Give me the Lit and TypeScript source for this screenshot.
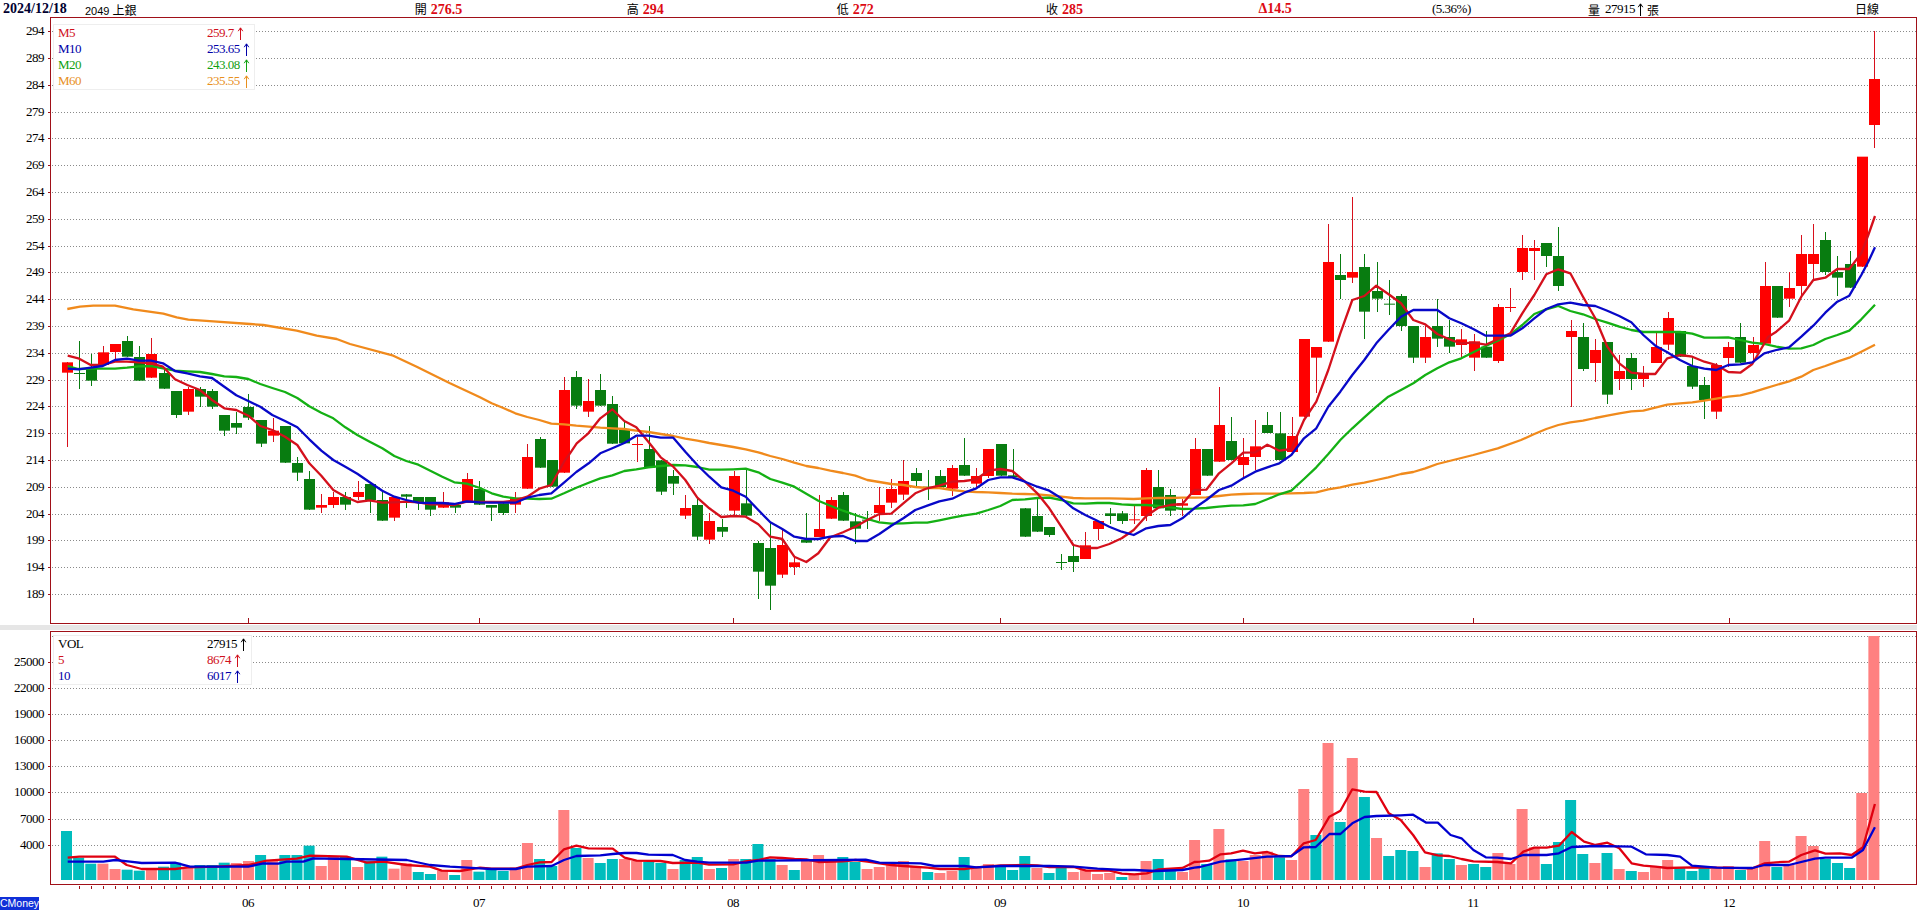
import { LitElement, html, css, svg } from "lit";
import { customElement } from "lit/decorators.js";

type Pt = [number, number];
const S = 12.13;
const X0 = 66.5;
const cx = (i: number) => X0 + i * S;

const conv = (x0: number, y0: number, h: number, s: string): Pt[] =>
  s.trim().split(/\s+/).map((p) => {
    const [a, b] = p.split(",").map(Number);
    return [x0 + a / h, y0 + b / 3] as Pt;
  });
const toPts = (p: Pt[]) => p.map(([x, y]) => `${x.toFixed(1)},${y.toFixed(1)}`).join(" ");

/* kind wickTop bodyTop bodyBottom wickBottom, as read from the crops */
const C6 = `r 127 127 158 380|g 63 159 161 207|g 102 146 182 197|r 78 97 135 135|r 72 72 96 118|g 48 63 110 110|g 78 111 182 182|r 54 102 173 173|g 150 159 206 206|g 213 213 285 293|r 200 207 275 284|g 200 207 230 260|g 207 213 260 268|g 285 285 332 347|g 275 309 323 341|g 222 261 293 300|g 300 300 371 380|r 293 332 347 365|g 318 318 428 428|g 411 429 458 482|g 454 477 569 569|r 522 555 563 578|r 516 531 555 563|g 516 531 554 569|r 484 516 531 540|g 492 492 540 578|g 516 540 602 602|r 531 531 593 602|g 523 523 530 563|g 531 531 546 569|g 531 531 569 587|r 516 547 563 563|g 555 555 563 580|r 460 477 546 546|g 484 507 554 554`;
const C7 = `g 495 495 503 542|g 490 490 519 526|r 457 473 494 518|r 313 351 446 446|g 290 297 383 383|g 360 360 440 440|r 112 150 398 398|g 94 111 197 206|r 118 183 215 230|g 103 150 197 197|g 167 192 311 311|g 247 269 310 310|r 290 312 314 365|g 257 327 383 383|g 361 361 455 464|g 391 408 431 464|r 466 504 527 536|g 473 495 590 600|r 519 543 599 613|g 538 561 575 590|r 392 408 512 530|g 390 490 527 527|g 602 609 695 776|g 545 624 737 809|r 567 615 704 713|r 650 667 681 704|g 519 599 608 608|r 465 567 591 591|r 472 480 536 536|g 457 465 542 542|g 520 544 566 613|g 514 539 541 566|r 441 495 519 543|r 418 447 488 504|r 361 423 464 480|g 385 399 423 440|g 390 440 442 480|g 391 408 441 441|r 376 384 446 468`;
const C8 = `g 775 855 887 887|r 865 888 911 925|r 807 807 888 895|g 792 792 887 887|g 807 886 892 895|g 985 985 1070 1070|g 950 1008 1055 1055|g 1041 1041 1065 1070|g 1122 1146 1148 1170|g 1095 1128 1146 1175|r 1056 1096 1137 1137|r 1023 1023 1047 1080|g 985 1000 1008 1032|g 994 1000 1023 1032|r 978 1018 1020 1032|r 865 870 1008 1023|g 870 921 985 985|g 928 945 992 1008|r 958 970 977 1008|r 775 807 945 945|g 807 807 887 887|r 622 735 845 845|g 712 783 840 840|r 775 831 855 893|r 720 799 831 870|g 697 735 759 759|g 697 760 840 840|r 712 768 816 816|r 477 477 710 710|r 501 501 533 638|r 132 246 485 485|g 222 285 300 356|r 52 276 293 308|g 222 261 395 476|g 246 333 356 396|g 300 371 373 404|g 343 348 438 452|g 438 438 533 548|r 438 471 533 548|g 357 438 476 500`;
const C9 = `g 420 471 500 518|r 447 478 495 532|r 462 484 533 572|g 454 500 533 533|r 372 381 543 548|r 324 381 383 396|r 165 204 276 300|r 180 204 213 300|g 189 189 228 261|g 141 228 318 333|r 420 453 471 680|g 429 471 567 572|r 477 510 549 606|g 486 486 644 672|r 526 573 597 630|g 519 534 597 630|r 558 582 597 620|r 458 501 549 549|r 396 414 494 510|g 453 453 530 530|g 530 558 620 628|g 590 615 660 718|r 550 555 695 718|r 486 501 534 560|g 430 471 548 548|r 472 495 519 550|r 246 318 491 491|g 318 318 413 413|r 276 324 356 380|r 165 222 318 348|r 132 222 252 300|g 156 180 276 285|g 228 276 293 348|g 213 252 323 323|r -70 -70 260 260|r -448 -303 -165 -95`;

type Candle = { k: string; wt: number; bt: number; bb: number; wb: number };
const parse = (s: string, y0: number): Candle[] =>
  s.split("|").map((r) => {
    const t = r.split(" ");
    const f = (v: string) => y0 + Number(v) / 3;
    return { k: t[0], wt: f(t[1]), bt: f(t[2]), bb: f(t[3]), wb: f(t[4]) };
  });
const CANDLES: Candle[] = [...parse(C6, 320), ...parse(C7, 340), ...parse(C8, 180), ...parse(C9, 180)];

const M5: Pt[] = [
  ...conv(0, 320, 3, "203,107 235,115 272,135 308,135 345,125 381,125 417,127 453,130 489,140 525,178 562,195 600,210 636,240 673,265 709,270 745,287 781,318 817,330 855,350 892,375 928,430 964,467 1000,510 1036,530 1072,546 1109,541 1147,548 1183,547 1219,545 1255,547 1291,553 1327,553 1363,555 1400,545"),
  ...conv(480, 340, 3, "0,486 35,486 70,486 106,481 142,470 178,446 214,435 252,365 270,340 290,310 325,280 361,235 397,208 433,243 469,262 505,305 542,352 580,380 616,420 652,473 688,505 724,531 760,528 797,530 835,553 871,590 907,597 943,650 979,666 1015,640 1051,592 1089,577 1126,560 1162,540 1198,522 1234,521 1270,490 1306,460 1342,445 1378,437 1417,425"),
  ...conv(960, 180, 3, "13,903 49,898 85,872 121,867 157,873 195,905 232,940 268,985 304,1040 340,1095 376,1104 412,1104 448,1092 485,1075 521,1050 559,1008 595,983 631,975 667,972 703,930 739,929 777,880 814,850 850,818 886,817 922,794 958,812 994,807 1032,720 1069,665 1105,570 1141,460 1177,360 1213,348 1249,317 1285,342 1323,370 1360,420 1396,433 1432,462"),
  ...conv(1440, 180, 3, "28,478 64,490 100,488 137,494 173,478 211,460 247,400 283,345 319,283 355,268 391,280 429,350 466,415 502,500 538,550 574,578 610,582 646,582 682,535 720,525 757,530 793,545 829,555 865,576 901,578 937,552 985,470 1009,455 1047,422 1084,350 1120,300 1156,293 1192,267 1228,267 1264,220 1285,165 1305,108"),
];
const M10: Pt[] = [
  ...conv(0, 320, 3, "203,146 235,148 272,143 308,138 345,120 381,116 417,122 453,122 489,130 525,153 562,160 600,169 636,174 673,200 709,226 745,243 781,260 817,285 855,303 892,322 928,358 964,392 1000,420 1036,440 1072,461 1109,487 1147,512 1183,530 1219,540 1255,548 1291,549 1327,549 1363,552 1400,544"),
  ...conv(480, 340, 3, "0,487 35,488 70,488 106,488 142,473 178,465 214,460 252,428 289,396 326,370 361,340 397,325 433,309 469,287 505,287 542,293 580,293 616,335 652,375 688,410 724,442 760,452 797,470 835,510 871,547 907,567 943,590 979,597 1015,597 1051,590 1089,588 1126,603 1162,603 1198,582 1234,557 1270,535 1306,510 1342,497 1378,484 1417,476"),
  ...conv(960, 180, 3, "13,938 49,925 85,900 121,892 157,892 195,905 232,920 268,932 304,955 340,985 376,1005 412,1022 448,1040 485,1055 521,1065 559,1045 595,1038 631,1035 667,1015 703,985 739,960 777,930 814,917 850,895 886,875 922,862 958,850 994,825 1032,775 1069,745 1105,680 1141,635 1177,585 1213,540 1249,490 1285,450 1323,410 1360,390 1396,390 1432,390"),
  ...conv(1440, 180, 3, "28,415 64,430 100,447 137,467 173,467 211,467 247,445 283,415 319,387 355,373 391,368 429,375 466,378 502,392 538,408 574,427 610,465 646,497 682,517 720,540 757,558 793,566 829,570 865,555 901,553 937,547 973,520 1009,510 1047,502 1084,470 1120,437 1156,398 1192,365 1228,347 1264,285 1285,245 1305,202"),
];
const M20: Pt[] = [
  ...conv(0, 320, 3, "203,138 235,147 272,146 308,146 345,146 381,143 417,139 453,138 489,145 525,152 562,154 600,156 636,162 673,169 709,171 745,177 781,192 817,204 855,216 892,234 928,259 964,278 1000,295 1036,322 1072,345 1109,365 1147,385 1183,408 1219,423 1255,434 1291,452 1327,470 1363,487 1400,491"),
  ...conv(480, 340, 3, "0,444 35,460 70,470 106,475 142,476 178,477 214,476 252,460 289,443 326,428 361,415 397,406 433,393 469,388 505,382 542,378 580,375 616,376 652,381 688,389 724,389 760,388 797,386 835,397 871,417 907,428 943,440 979,461 1015,482 1051,497 1089,512 1126,525 1162,537 1198,547 1234,551 1270,550 1306,548 1342,548 1378,541 1417,533"),
  ...conv(960, 180, 3, "13,1006 49,1001 85,990 121,978 157,960 195,958 232,954 268,953 304,960 340,970 376,971 412,969 448,969 485,973 521,975 559,975 595,978 631,982 667,987 703,986 739,984 777,980 814,977 850,976 886,972 922,958 958,943 994,932 1032,897 1069,862 1105,822 1141,780 1177,745 1213,712 1249,680 1285,650 1323,630 1360,610 1396,585 1432,565"),
  ...conv(1440, 180, 3, "28,547 64,535 100,517 137,498 173,482 211,463 247,435 283,402 319,388 355,378 391,393 429,403 466,417 502,428 538,440 574,450 610,456 646,456 682,456 720,456 757,461 793,473 829,473 865,472 901,480 937,488 973,492 1009,500 1047,506 1084,505 1120,495 1156,477 1192,465 1228,452 1264,418 1305,374"),
];
const M60: Pt[] = [
  ...conv(50, 290, 3, "52,57 90,50 130,47 195,47 250,58 340,71 380,82 415,89 490,94 600,102 640,105 740,122 800,137 860,147 900,162"),
  ...conv(0, 320, 3, "1180,107 1250,140 1350,190"),
  ...conv(480, 340, 3, "0,172 35,190 70,204 106,220 142,231 178,240 214,251 252,253 289,257 326,260 361,263 397,265 433,267 469,272 505,276 542,282 580,288 616,296 652,302 688,309 724,315 760,321 797,328 835,337 871,348 907,357 943,368 979,378 1015,384 1051,392 1089,399 1126,407 1162,420 1198,426 1234,432 1270,435 1306,441 1342,444 1378,444 1417,450"),
  ...conv(960, 180, 3, "13,934 49,936 85,937 121,939 157,941 195,942 232,943 268,946 304,950 340,954 376,955 412,955 448,955 485,956 521,957 559,955 595,954 631,954 667,953 703,953 739,952 777,948 814,944 850,942 886,941 922,941 958,941 994,940 1032,939 1069,937 1105,928 1141,922 1177,914 1213,908 1249,900 1285,892 1323,882 1360,876 1396,865 1432,852"),
  ...conv(1440, 180, 3, "100,825 173,805 243,780 283,762 319,747 355,735 391,727 429,722 466,714 502,707 538,700 574,694 610,692 646,683 682,674 720,670 757,667 793,662 829,656 865,650 901,646 937,637 973,626 1009,615 1047,604 1084,590 1120,570 1156,558 1192,545 1228,533 1264,515 1305,494"),
];

/* volume bars: colour and top in crop units (crop bottom is the bars' baseline) */
const V4 = `t723 t803 t821 p821 p837 t839 t842 p838 t830 t818 p833 t825 t825 t818 p819 p813 t795 p813 t795 t795 t767 p828 p798 t800 p831 t813 t800 p836 p820 t846 t852 p842 t855 p810 t845`;
const V10 = `t720 t723 p713 p639 t687 t708 p540 t654 p684 t699 t687 p687 p693 t696 t699 p717 t690 t681 p717 t714 p687 t687 t642 t687 p705 t720 p690 p675 p690 t681 t696 p717 p711 p705 p693 p708 t726 p729 p723 t681 p714 p702 t708 t720 t678 p714 t729 t708 p726 p720 p732 p729 t741 p732 p693 t687 t714 p726 p630`;
const V5 = `t792 p687 t778 p783 p765 p755 t772 p780 p567 t705 p429 t666 p474 t591 p714 t768 t750 t753 p801 t760 t777 p795 t792 t801 p759 p792 p627 p742 t792 t726 t600 t762 p789 t759 p807 t813 p816 p798 p780 t804 t813 t801 p807 p798 t810 p803 p723 t801 p792 p708 p738 t777 t789 t804 p579 p108`;
const vol = (s: string, y0: number) =>
  s.split(" ").map((t) => ({ k: t[0], top: y0 + Number(t.slice(1)) / 3 }));
const BARS = [...vol(V4, 590), ...vol(V10, 630), ...vol(V5, 600)];
const BASE = 880;

const VM5: Pt[] = [
  ...conv(0, 590, 3, "203,803 238,800 345,800 380,825 425,837 525,837 563,832 650,830 745,825 800,812 890,806 930,797 1040,800 1100,818 1150,815 1220,825 1290,830 1325,842 1380,843"),
  ...conv(480, 630, 2.178, "0,713 25,716 78,716 103,705 130,697 156,696 183,658 210,647 236,655 289,656 315,683 341,692 393,693 420,699 473,698 499,704 552,703 578,694 606,690 632,682 658,684 685,687 711,688 737,696 790,694 818,690 844,695 896,705 922,708 975,713 1002,717 1055,717 1081,712 1134,706 1187,705 1214,706 1240,711 1293,711 1320,722 1371,722 1398,731 1425,733 1452,730 1478,718 1530,714 1556,696"),
  ...conv(1200, 600, 2.187, "0,785 20,782 45,763 68,760 94,752 120,760 147,756 173,768 200,769 227,730 253,720 283,650 307,632 333,568 360,575 386,576 413,640 439,660 466,705 492,757 520,766 545,768 572,777 598,784 650,786 680,790 707,755 731,743 758,743 785,737 813,696 840,725 865,735 891,728 917,745 944,790 970,797 996,800 1022,804 1076,802 1130,803 1208,805 1235,790 1260,787 1288,785 1315,765 1345,751 1368,761 1400,760 1425,765 1450,742 1476,612"),
];
const VM10: Pt[] = [
  ...conv(0, 590, 3, "203,815 310,815 345,810 390,815 425,819 525,818 570,830 745,830 790,820 835,821 860,815 910,815 940,805 1040,807 1220,810 1290,825 1350,830"),
  ...conv(480, 630, 2.178, "0,715 25,717 78,717 103,710 156,708 183,690 210,678 262,676 289,672 315,669 341,669 367,674 420,675 447,690 473,695 499,698 580,698 606,692 790,690 840,689 870,698 960,700 990,708 1055,708 1081,712 1134,708 1187,708 1240,708 1293,710 1345,716 1398,720 1425,720 1470,723 1530,720 1556,713"),
  ...conv(1200, 600, 2.187, "0,801 45,785 94,778 147,770 200,768 227,742 253,741 283,702 307,702 333,670 360,651 386,648 439,646 466,644 495,668 520,668 548,705 572,715 598,750 625,772 650,773 680,777 707,765 758,765 785,760 813,741 865,738 917,739 944,740 975,763 1022,765 1050,770 1076,797 1130,803 1208,804 1235,795 1288,795 1345,776 1368,773 1425,773 1450,750 1476,682"),
];

const PRICES = Array.from({ length: 22 }, (_, i) => 294 - i * 5);
const py = (p: number) => 31.3 + (294 - p) * 5.358;
const VOLS: [number, number][] = [
  [25000, 662], [22000, 688], [19000, 714], [16000, 740],
  [13000, 766], [10000, 792], [7000, 819], [4000, 845],
];
const MONTHS: [string, number][] = [
  ["06", 248], ["07", 479], ["08", 733], ["09", 1000],
  ["10", 1243], ["11", 1473], ["12", 1729],
];

const arrow = html`<svg class="arr" viewBox="0 0 7 13" width="7" height="13"><path d="M3.5 13V1M1.2 4.2 3.5 .8l2.3 3.4" fill="none" stroke="currentColor" stroke-width="1"></path></svg>`;

@customElement("app-root")
export class AppRoot extends LitElement {
  static styles = css`
    :host {
      display: block;
      width: 1917px;
      height: 916px;
      background: #fff;
      overflow: hidden;
      color: #000;
      font-family: "Liberation Serif", "Noto Sans CJK TC", serif;
    }
    .head {
      display: grid;
      grid-template-columns: 82px 329.7px 212px 210px 209.3px 212.5px 173.5px 156px 267px 1fr;
      height: 17px;
      padding-left: 3px;
      align-items: center;
      font-size: 13px;
      letter-spacing: -0.5px;
      white-space: nowrap;
    }
    .date { font-weight: bold; font-size: 14px; letter-spacing: 0; color: #000030; }
    .code { font-family: "Liberation Sans", "Noto Sans CJK TC", sans-serif; font-size: 11px; letter-spacing: 0; }
    .code span, .cj { font-family: "Noto Sans CJK TC", sans-serif; font-size: 12px; letter-spacing: 0; }
    .up { font-weight: bold; color: #dd0a14; font-size: 14px; letter-spacing: 0; }
    .cj + .up { margin-left: 4px; }
    .vol { display: flex; align-items: center; }
    .num { margin-left: 5px; }
    .vol .arr { margin: 0 3px 0 2px; }
    .panel { display: flex; }
    .p1 { height: 607px; }
    .p2 { height: 254px; }
    .axis { width: 50px; flex: none; display: block; }
    .plot {
      flex: 1;
      position: relative;
      border: 1px solid #a01018;
      box-sizing: border-box;
    }
    .plot > svg { display: block; width: 100%; height: 100%; }
    .band { height: 5px; margin: 1px 0; background: #e6e6e6; }
    .legend {
      position: absolute;
      left: 2px;
      background: #fff;
      border: 1px solid #eee;
      box-sizing: border-box;
      padding-left: 4px;
      font-size: 13px;
      letter-spacing: -0.5px;
      line-height: 16px;
      display: grid;
      grid-template-columns: 149px 1fr;
    }
    .legend .val { display: flex; align-items: center; }
    .legend .arr { margin-left: 3px; }
    .l1 { top: 6px; width: 202px; height: 66px; }
    .l2 { top: 3px; width: 199px; height: 50px; }
    .red { color: #d0101c; }
    .blue { color: #0000a8; }
    .green { color: #10a010; }
    .orange { color: #e8901e; }
    .foot { display: flex; height: 31px; }
    .cm {
      width: 39px;
      height: 13px;
      margin-top: 12px;
      flex: none;
      background: #1030d8;
      color: #fff;
      font-family: "Liberation Sans", sans-serif;
      font-size: 10.5px;
      line-height: 13px;
      white-space: nowrap;
    }
    .foot > svg { flex: 1; display: block; height: 31px; }
    .t { font-family: "Liberation Serif", serif; font-size: 13px; letter-spacing: -0.5px; fill: #000; }
    .grid { stroke: #8a8a8a; stroke-width: 1; stroke-dasharray: 1 2; shape-rendering: crispEdges; }
    .ma { fill: none; stroke-width: 2.3; stroke-linejoin: round; }
    .wick { stroke-width: 1; shape-rendering: crispEdges; }
    .rc { fill: #ff0000; }
    .gc { fill: #087c10; }
    .rw { stroke: #d8101c; }
    .gw { stroke: #087c10; }
    .tick { stroke: #a01018; stroke-width: 1; shape-rendering: crispEdges; }
    .pb { fill: #ff8080; }
    .tb { fill: #00bdbd; }
  `;

  private axis(items: [string, number][], top: number, h: number) {
    return html`<svg class="axis" viewBox="0 ${top} 50 ${h}" height=${h}>
      ${items.map(([t, y]) => svg`
        <text class="t" x="44" y=${y + 4} text-anchor="end">${t}</text>
        <line class="tick" x1="48" x2="50" y1=${Math.round(y) + 0.5} y2=${Math.round(y) + 0.5}></line>`)}
    </svg>`;
  }

  private gridLines(ys: number[]) {
    return ys.map((y) => {
      const r = Math.round(y) + 0.5;
      return svg`<line class="grid" x1="52" x2="1916" y1=${r} y2=${r}></line>`;
    });
  }

  private candle(c: Candle, i: number) {
    const x = cx(i);
    const wx = Math.round(x) + 0.5;
    const h = Math.max(c.bb - c.bt, 1);
    return svg`
      <line class="wick ${c.k === "r" ? "rw" : "gw"}" x1=${wx} x2=${wx} y1=${c.wt} y2=${c.wb}></line>
      <rect class=${c.k === "r" ? "rc" : "gc"} x=${wx - 5.5} width="11" y=${c.bt} height=${h}></rect>`;
  }

  render() {
    const priceItems = PRICES.map((p) => [String(p), py(p)] as [string, number]);
    const volItems = VOLS.map(([v, y]) => [String(v), y] as [string, number]);
    return html`
      <div class="head">
        <div class="date">2024/12/18</div>
        <div class="code">2049 <span>上銀</span></div>
        <div><span class="cj">開</span><span class="up">276.5</span></div>
        <div><span class="cj">高</span><span class="up">294</span></div>
        <div><span class="cj">低</span><span class="up">272</span></div>
        <div><span class="cj">收</span><span class="up">285</span></div>
        <div><span class="up">Δ14.5</span></div>
        <div>(5.36%)</div>
        <div class="vol"><span class="cj">量</span><span class="num">27915</span>${arrow}<span class="cj">張</span></div>
        <div><span class="cj">日線</span></div>
      </div>

      <div class="panel p1">
        ${this.axis(priceItems, 17, 607)}
        <div class="plot">
          <svg viewBox="51 18 1865 605" preserveAspectRatio="none">
            ${this.gridLines(PRICES.map(py))}
            ${MONTHS.map(([, x]) => svg`<line class="tick" x1=${x + 0.5} x2=${x + 0.5} y1="618" y2="623"></line>`)}
            ${CANDLES.map((c, i) => this.candle(c, i))}
            <polyline class="ma" stroke="#f08a1c" points=${toPts(M60)}></polyline>
            <polyline class="ma" stroke="#14b014" points=${toPts(M20)}></polyline>
            <polyline class="ma" stroke="#d4101c" points=${toPts(M5)}></polyline>
            <polyline class="ma" stroke="#0808c8" points=${toPts(M10)}></polyline>
          </svg>
          <div class="legend l1">
            <span class="red">M5</span><span class="val red">259.7${arrow}</span>
            <span class="blue">M10</span><span class="val blue">253.65${arrow}</span>
            <span class="green">M20</span><span class="val green">243.08${arrow}</span>
            <span class="orange">M60</span><span class="val orange">235.55${arrow}</span>
          </div>
        </div>
      </div>

      <div class="band"></div>

      <div class="panel p2">
        ${this.axis(volItems, 631, 254)}
        <div class="plot">
          <svg viewBox="51 632 1865 252" preserveAspectRatio="none">
            ${this.gridLines([636, ...VOLS.map(([, y]) => y)])}
            ${BARS.map((b, i) => svg`<rect class=${b.k === "p" ? "pb" : "tb"} x=${cx(i) - 5.5} width="11" y=${b.top} height=${BASE - b.top}></rect>`)}
            <polyline class="ma" stroke="#e00010" points=${toPts(VM5)}></polyline>
            <polyline class="ma" stroke="#0000d0" points=${toPts(VM10)}></polyline>
          </svg>
          <div class="legend l2">
            <span>VOL</span><span class="val">27915${arrow}</span>
            <span class="red">5</span><span class="val red">8674${arrow}</span>
            <span class="blue">10</span><span class="val blue">6017${arrow}</span>
          </div>
        </div>
      </div>

      <div class="foot">
        <div class="cm">CMoney</div>
        <svg viewBox="39 885 1878 31">
          ${CANDLES.map((_, i) => (i === 0 ? "" : svg`<line class="tick" x1=${Math.round(cx(i)) + 0.5} x2=${Math.round(cx(i)) + 0.5} y1="886" y2="889"></line>`))}
          ${MONTHS.map(([t, x]) => svg`<text class="t" x=${x} y="907" text-anchor="middle">${t}</text>`)}
        </svg>
      </div>
    `;
  }
}
